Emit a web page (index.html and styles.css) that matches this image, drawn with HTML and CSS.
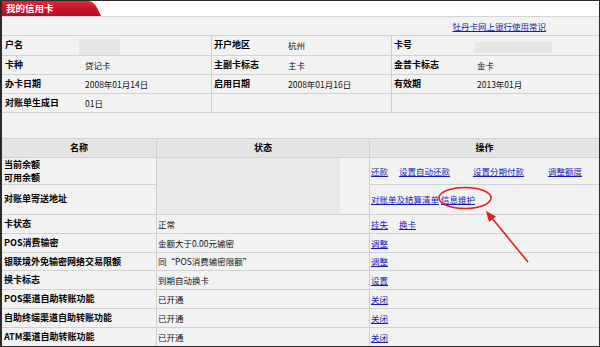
FILE: index.html
```html
<!DOCTYPE html>
<html>
<head>
<meta charset="utf-8">
<title>我的信用卡</title>
<link rel="stylesheet" href="styles.css">
</head>
<body>
<div class="frame">
  <div class="tabbar"><div class="tab">我的信用卡</div></div>
  <div class="linkrow"><a href="#">牡丹卡网上银行使用常识</a></div>
  <table class="info">
    <colgroup><col class="i1"><col class="i2"><col class="i3"><col class="i4"><col class="i5"><col class="i6"></colgroup>
    <tr><th>户名</th><td><span class="blur bname"></span></td><th class="g">开户地区</th><td>杭州</td><th class="g">卡号</th><td><span class="blur bcard"></span></td></tr>
    <tr><th>卡种</th><td>贷记卡</td><th class="g">主副卡标志</th><td>主卡</td><th class="g">金普卡标志</th><td>金卡</td></tr>
    <tr><th>办卡日期</th><td>2008年01月14日</td><th class="g">启用日期</th><td>2008年01月16日</td><th class="g">有效期</th><td>2013年01月</td></tr>
    <tr><th>对账单生成日</th><td>01日</td><th class="g"></th><td></td><th class="g"></th><td></td></tr>
  </table>
  <div class="gap"></div>
  <table class="ops">
    <colgroup><col class="o1"><col class="o2"><col class="o3"></colgroup>
    <tr class="head"><th>名称</th><th class="s">状态</th><th class="s">操作</th></tr>
    <tr class="tall"><td class="lbl two">当前余额<br>可用余额</td><td class="st blurcell" rowspan="2"></td><td class="op"><div class="acts"><a href="#">还款</a><a href="#">设置自动还款</a><a href="#">设置分期付款</a><a href="#">调整额度</a></div></td></tr>
    <tr class="taller"><td class="lbl">对账单寄送地址</td><td class="op"><div class="acts2"><a href="#">对账单及结算清单</a><a href="#">信息维护</a></div></td></tr>
    <tr><td class="lbl">卡状态</td><td class="st">正常</td><td class="op"><div class="acts"><a href="#">挂失</a><a href="#">换卡</a></div></td></tr>
    <tr><td class="lbl">POS消费输密</td><td class="st">金额大于0.00元输密</td><td class="op"><a href="#">调整</a></td></tr>
    <tr class="short"><td class="lbl">银联境外免输密网络交易限额</td><td class="st">同“POS消费输密限额”</td><td class="op"><a href="#">调整</a></td></tr>
    <tr><td class="lbl">换卡标志</td><td class="st">到期自动换卡</td><td class="op"><a href="#">设置</a></td></tr>
    <tr><td class="lbl">POS渠道自助转账功能</td><td class="st">已开通</td><td class="op"><a href="#">关闭</a></td></tr>
    <tr><td class="lbl">自助终端渠道自助转账功能</td><td class="st">已开通</td><td class="op"><a href="#">关闭</a></td></tr>
    <tr><td class="lbl">ATM渠道自助转账功能</td><td class="st">已开通</td><td class="op"><a href="#">关闭</a></td></tr>
  </table>
  <svg class="annot" width="600" height="347" viewBox="0 0 600 347">
    <ellipse cx="465" cy="198" rx="26" ry="10.5" fill="none" stroke="#e0201c" stroke-width="1.6"/>
    <line x1="528" y1="262" x2="491" y2="217" stroke="#e0201c" stroke-width="1.6"/>
    <polygon points="486,211 496,216.5 489,222" fill="#e0201c"/>
  </svg>
</div>
</body>
</html>
```
FILE: styles.css
```css
* { box-sizing: border-box; }
html, body { margin: 0; padding: 0; background: #fff; }
body { font-family: "Noto Sans CJK SC", "Noto Sans", sans-serif; font-size: 8.5px; color: #111; }

.frame {
  position: relative;
  width: 600px;
  height: 347px;
  border: 1px solid #2a2a2a;
  border-left-width: 2px;
  overflow: hidden;
  background: #f2f2f2;
}

.tabbar {
  height: 16px;
  background: #fff;
  border-bottom: 1px solid #d4d4d4;
}
.tab {
  width: 99px;
  height: 15px;
  background: linear-gradient(#e0253a, #c4142a 60%, #b10f22);
  clip-path: path('M0 0 H87 Q93 0 99 15 H0 Z');
  color: #fff;
  font-weight: bold;
  font-size: 9.5px;
  line-height: 15px;
  padding-left: 4px;
}

.linkrow {
  height: 19px;
  line-height: 18px;
  border-bottom: 1px solid #d2d2d2;
  text-align: right;
  padding-right: 53px;
}

a { color: #1a1ab0; text-decoration: underline; }

table { border-collapse: separate; border-spacing: 0; table-layout: fixed; width: 597px; }
th, td { padding: 0; white-space: nowrap; overflow: hidden; vertical-align: middle; }

.info .i1 { width: 77px; }
.info .i2 { width: 132px; }
.info .i3 { width: 71px; }
.info .i4 { width: 109px; }
.info .i5 { width: 80px; }
.info .i6 { width: 128px; }
.info th, .info td {
  line-height: 18px;
  border-bottom: 1px solid #d2d2d2;
  text-align: left;
}
.info th { font-weight: bold; font-size: 9px; padding-left: 3px; color: #000; }
.info th.g { border-left: 1px solid #cfcfcf; padding-left: 2px; }
.info td { padding-left: 6px; }

.blur { display: inline-block; vertical-align: middle; background: #e6e6e6; }
.bname { width: 43px; height: 16px; margin-left: -8px; }
.bcard { width: 77px; height: 11px; margin-left: -2px; }

.gap { height: 26px; border-bottom: 1px solid #d2d2d2; }

.ops .o1 { width: 154px; }
.ops .o2 { width: 213px; }
.ops .o3 { width: 230px; }
.ops th, .ops td {
  line-height: 18px;
  border-bottom: 1px solid #d2d2d2;
  text-align: left;
}
.ops .s, .ops .st, .ops .op { border-left: 1px solid #cfcfcf; }
.ops .head th { background: #e4e4e4; text-align: center; font-weight: bold; font-size: 9px; color: #000; }
.ops .lbl { font-weight: bold; font-size: 9px; padding-left: 2px; color: #000; }
.ops .st { padding-left: 1px; }
.ops .op { padding-left: 1px; }
.ops .tall td { height: 26px; }
.ops .two { line-height: 13px; }
.ops .taller td { height: 30px; }
.ops .short td { line-height: 17px; }
.ops .blurcell { background: linear-gradient(to right, #e9e9e9 183px, #f2f2f2 183px); }

.acts { display: grid; grid-template-columns: 28px 74px 75px auto; justify-items: start; }
.acts2 { display: grid; grid-template-columns: 70px auto; justify-items: start; }

.annot { position: absolute; left: -2px; top: -1px; pointer-events: none; }
```
